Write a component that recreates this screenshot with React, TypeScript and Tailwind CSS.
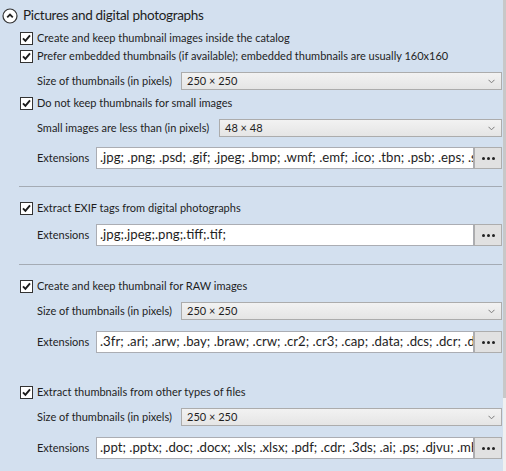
import React from 'react'

const font = { fontFamily: 'Lato, "Open Sans", "Liberation Sans", sans-serif' }

function Check({ label, className = '' }: { label: string; className?: string }) {
  return (
    <div className={`flex h-[18px] items-center whitespace-nowrap pl-[20px] ${className}`}>
      <span className="flex h-[13px] w-[13px] shrink-0 items-center justify-center border border-[#333333] bg-white">
        <svg width="9" height="9" viewBox="0 0 9 9">
          <path d="M1 4.4 L3.4 6.9 L8 1.4" fill="none" stroke="#1a1a1a" strokeWidth="1.9" />
        </svg>
      </span>
      <span className="ml-[4px] text-[11px] text-[#1e1e1e]">{label}</span>
    </div>
  )
}

function SelectRow({ label, value, labelW, className = '' }: { label: string; value: string; labelW: string; className?: string }) {
  return (
    <div className={`flex h-[18px] items-center whitespace-nowrap pl-[37px] pr-[1px] ${className}`}>
      <span className={`${labelW} shrink-0 text-[11px] text-[#1e1e1e]`}>{label}</span>
      <div className="flex h-[18px] flex-1 items-center justify-between border border-[#acacac] bg-gradient-to-b from-[#f2f2f2] to-[#e5e5e5] pl-[5px] pr-[6px]">
        <span className="text-[11px] text-[#1e1e1e]">{value}</span>
        <svg width="7" height="5" viewBox="0 0 7 5">
          <path d="M0.5 0.8 L3.5 3.8 L6.5 0.8" fill="none" stroke="#7a7a7a" strokeWidth="1" />
        </svg>
      </div>
    </div>
  )
}

function ExtRow({ value, className = '' }: { value: string; className?: string }) {
  return (
    <div className={`flex h-[22px] items-center whitespace-nowrap pl-[37px] pr-[1px] ${className}`}>
      <span className="w-[59px] shrink-0 text-[11px] text-[#1e1e1e]">Extensions</span>
      <div className="flex h-[22px] min-w-0 flex-1 items-center overflow-hidden border border-[#abadb3] bg-white pl-[3px]">
        <span className="text-[13.2px] text-[#1e1e1e]">{value}</span>
      </div>
      <div className="flex h-[22px] w-[28px] shrink-0 items-center justify-center gap-[2px] border border-[#adadad] bg-[#e1e1e1]">
        <span className="h-[3px] w-[3px] rounded-full bg-[#222]" />
        <span className="h-[3px] w-[3px] rounded-full bg-[#222]" />
        <span className="h-[3px] w-[3px] rounded-full bg-[#222]" />
      </div>
    </div>
  )
}

export default function App() {
  return (
    <div className="flex h-[471px] w-[506px] overflow-hidden bg-[#d3e0ef]" style={font}>
      <div className="flex min-w-0 flex-1 flex-col">
        {/* header */}
        <div className="flex h-[29px] items-center whitespace-nowrap pl-[2px] pt-[2px]">
          <svg width="16" height="16" viewBox="0 0 16 16">
            <circle cx="8" cy="8" r="7" fill="white" stroke="#333" strokeWidth="1.2" />
            <path d="M5.2 9.4 L8 6.6 L10.8 9.4" fill="none" stroke="#222" strokeWidth="1.8" />
          </svg>
          <span className="ml-[5px] text-[13.5px] tracking-[-0.3px] text-[#1e1e1e]">Pictures and digital photographs</span>
        </div>

        <Check label="Create and keep thumbnail images inside the catalog" />
        <Check label="Prefer embedded thumbnails (if available); embedded thumbnails are usually 160x160" />
        <SelectRow className="mt-[7px]" label="Size of thumbnails (in pixels)" value="250 × 250" labelW="w-[144px]" />
        <Check className="mt-[4px]" label="Do not keep thumbnails for small images" />
        <SelectRow className="mt-[7px]" label="Small images are less than (in pixels)" value="48 × 48" labelW="w-[182px]" />
        <ExtRow className="mt-[10px]" value=".jpg; .png; .psd; .gif; .jpeg; .bmp; .wmf; .emf; .ico; .tbn; .psb; .eps; .svg; .svgz; .webp" />

        <div className="ml-[19px] mr-[1px] mt-[17px] h-px bg-[#a4abb4]" />

        <Check className="mt-[12px]" label="Extract EXIF tags from digital photographs" />
        <ExtRow className="mt-[7px]" value=".jpg;.jpeg;.png;.tiff;.tif;" />

        <div className="ml-[19px] mr-[1px] mt-[18px] h-px bg-[#a4abb4]" />

        <Check className="mt-[12px]" label="Create and keep thumbnail for RAW images" />
        <SelectRow className="mt-[7px]" label="Size of thumbnails (in pixels)" value="250 × 250" labelW="w-[144px]" />
        <ExtRow className="mt-[11px]" value=".3fr; .ari; .arw; .bay; .braw; .crw; .cr2; .cr3; .cap; .data; .dcs; .dcr; .dng; .drf" />

        <Check className="mt-[30px]" label="Extract thumbnails from other types of files" />
        <SelectRow className="mt-[7px]" label="Size of thumbnails (in pixels)" value="250 × 250" labelW="w-[144px]" />
        <ExtRow className="mt-[11px]" value=".ppt; .pptx; .doc; .docx; .xls; .xlsx; .pdf; .cdr; .3ds; .ai; .ps; .djvu; .mht; .odt" />
      </div>
      {/* scrollbar */}
      <div className="flex w-[3px] flex-col bg-[#f0f0f0]">
        <div className="h-[398px] bg-[#c8c8c8]" />
      </div>
    </div>
  )
}
